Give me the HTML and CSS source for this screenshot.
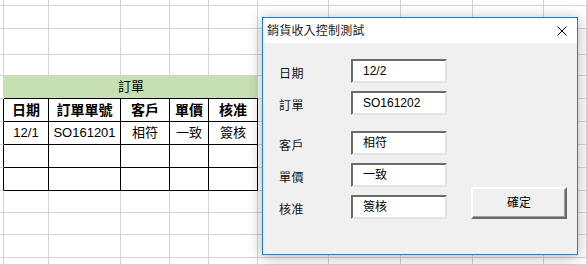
FILE: index.html
```html
<!DOCTYPE html>
<html lang="zh-Hant">
<head>
<meta charset="utf-8">
<title>銷貨收入控制測試</title>
<link rel="stylesheet" href="styles.css">
</head>
<body>
<div class="screen">
  <div class="sheet">
    <!-- row 1 -->
    <div class="c"></div><div class="c"></div><div class="c"></div><div class="c"></div><div class="c"></div><div class="c"></div><div class="c"></div><div class="c"></div><div class="c"></div><div class="c"></div><div class="c"></div>
    <!-- row 2 -->
    <div class="c"></div><div class="c"></div><div class="c"></div><div class="c"></div><div class="c"></div><div class="c"></div><div class="c"></div><div class="c"></div><div class="c"></div><div class="c"></div><div class="c"></div>
    <!-- row 3 -->
    <div class="c"></div><div class="c"></div><div class="c"></div><div class="c"></div><div class="c"></div><div class="c"></div><div class="c"></div><div class="c"></div><div class="c"></div><div class="c"></div><div class="c"></div>
    <!-- row 4 -->
    <div class="c"></div><div class="c"></div><div class="c"></div><div class="c"></div><div class="c"></div><div class="c"></div><div class="c"></div><div class="c"></div><div class="c"></div><div class="c"></div><div class="c"></div>
    <!-- row 5: merged title -->
    <div class="c"></div><div class="c title-cell">訂單</div><div class="c"></div><div class="c"></div><div class="c"></div><div class="c"></div><div class="c"></div>
    <!-- row 6: header -->
    <div class="c edge"></div><div class="c t th">日期</div><div class="c t th">訂單單號</div><div class="c t th">客戶</div><div class="c t th">單價</div><div class="c t th">核准</div><div class="c"></div><div class="c"></div><div class="c"></div><div class="c"></div><div class="c"></div>
    <!-- row 7: data -->
    <div class="c edge"></div><div class="c t">12/1</div><div class="c t">SO161201</div><div class="c t">相符</div><div class="c t">一致</div><div class="c t">簽核</div><div class="c"></div><div class="c"></div><div class="c"></div><div class="c"></div><div class="c"></div>
    <!-- row 8 -->
    <div class="c edge"></div><div class="c t"></div><div class="c t"></div><div class="c t"></div><div class="c t"></div><div class="c t"></div><div class="c"></div><div class="c"></div><div class="c"></div><div class="c"></div><div class="c"></div>
    <!-- row 9 -->
    <div class="c edge"></div><div class="c t"></div><div class="c t"></div><div class="c t"></div><div class="c t"></div><div class="c t"></div><div class="c"></div><div class="c"></div><div class="c"></div><div class="c"></div><div class="c"></div>
    <!-- row 10 -->
    <div class="c"></div><div class="c"></div><div class="c"></div><div class="c"></div><div class="c"></div><div class="c"></div><div class="c"></div><div class="c"></div><div class="c"></div><div class="c"></div><div class="c"></div>
    <!-- row 11 -->
    <div class="c"></div><div class="c"></div><div class="c"></div><div class="c"></div><div class="c"></div><div class="c"></div><div class="c"></div><div class="c"></div><div class="c"></div><div class="c"></div><div class="c"></div>
    <!-- row 12 -->
    <div class="c"></div><div class="c"></div><div class="c"></div><div class="c"></div><div class="c"></div><div class="c"></div><div class="c"></div><div class="c"></div><div class="c"></div><div class="c"></div><div class="c"></div>
    <!-- row 13 -->
    <div class="c"></div><div class="c"></div><div class="c"></div><div class="c"></div><div class="c"></div><div class="c"></div><div class="c"></div><div class="c"></div><div class="c"></div><div class="c"></div><div class="c"></div>
  </div>

  <div class="dialog">
    <div class="titlebar">
      <span class="title">銷貨收入控制測試</span>
      <svg class="close" width="10" height="10" viewBox="0 0 10 10" aria-hidden="true">
        <path d="M0.5 0.5 L9.5 9.5 M9.5 0.5 L0.5 9.5" stroke="#000" stroke-width="1" fill="none"/>
      </svg>
    </div>
    <div class="form">
      <div class="label">日期</div><div class="box">12/2</div>
      <div class="label">訂單</div><div class="box">SO161202</div>
      <div class="label sep">客戶</div><div class="box sep">相符</div>
      <div class="label">單價</div><div class="box">一致</div>
      <div class="label">核准</div><div class="box">簽核</div>
      <div class="button">確定</div>
    </div>
  </div>
</div>
</body>
</html>
```

FILE: styles.css
```css
* {
  box-sizing: border-box;
}

html, body {
  margin: 0;
  padding: 0;
  background: #ffffff;
}

body {
  font-family: "Liberation Sans", "Noto Sans CJK TC", sans-serif;
  color: #000;
}

.screen {
  position: relative;
  width: 587px;
  height: 265px;
  overflow: hidden;
}

.sheet {
  display: grid;
  width: 587px;
  height: 265px;
  grid-template-columns: 4px 45px 72px 49px 39px 49px 71px 72px 72px 71px 1fr;
  grid-template-rows: 6px 23px 26px 21px 23px 23px 23px 23px 23px 22px 22px 23px 1fr;
}

.c {
  border-right: 1px solid #d4d4d4;
  border-bottom: 1px solid #d4d4d4;
  background: #fff;
  display: flex;
  align-items: center;
  justify-content: center;
  font-size: 13px;
  line-height: 16px;
  white-space: nowrap;
}

.title-cell {
  grid-column: span 5;
  background: #c6e0b4;
  border-right: none;
  border-bottom: 1px solid #000;
  font-size: 13px;
}

.edge {
  border-right-color: #000;
}

.t {
  border-right-color: #000;
  border-bottom-color: #000;
}

.th {
  font-weight: bold;
  font-size: 14px;
}

/* dialog */
.dialog {
  position: absolute;
  left: 262px;
  top: 17px;
  width: 316px;
  height: 238px;
  border: 1px solid #1883d7;
  background: #f0f0f0;
  box-shadow: 0 2px 14px rgba(0, 0, 0, 0.3);
  display: flex;
  flex-direction: column;
}

.titlebar {
  height: 25px;
  background: #fff;
  display: flex;
  align-items: center;
  justify-content: space-between;
  padding-left: 4px;
  padding-right: 10px;
}

.title {
  font-size: 12px;
  line-height: 14px;
  color: #1a1a1a;
  letter-spacing: 0.2px;
}

.close {
  display: block;
}

.form {
  display: grid;
  grid-template-columns: 72px 96px 24px 96px;
  grid-template-rows: 24px 24px 32px 24px 24px;
  row-gap: 8px;
  padding: 16px 0 0 16px;
}

.label {
  grid-column: 1;
  font-size: 12px;
  line-height: 16px;
  padding-top: 7px;
  letter-spacing: 0.5px;
  color: #111;
}

.box {
  grid-column: 2;
  height: 24px;
  background: #fff;
  border-top: 2px solid #6a6a6a;
  border-left: 2px solid #6a6a6a;
  border-right: 2px solid #e3e3e3;
  border-bottom: 2px solid #e3e3e3;
  padding-left: 10px;
  font-size: 12px;
  line-height: 20px;
  white-space: nowrap;
}

.sep {
  margin-top: 8px;
}

.button {
  grid-column: 4;
  grid-row: 4 / 6;
  align-self: end;
  height: 32px;
  background: #f0f0f0;
  border-top: 2px solid #ffffff;
  border-left: 2px solid #ffffff;
  border-right: 2px solid #6a6a6a;
  border-bottom: 2px solid #6a6a6a;
  box-shadow: inset -1px -1px 0 #a0a0a0;
  display: flex;
  align-items: center;
  justify-content: center;
  font-size: 12px;
  line-height: 16px;
}
```
